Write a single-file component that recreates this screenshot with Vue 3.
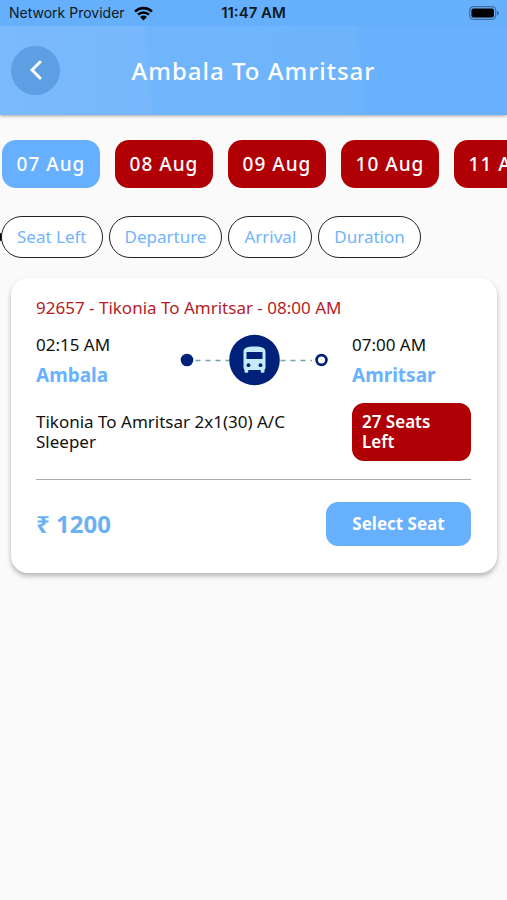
<script setup>
import { ref } from 'vue'

const dates = ['07 Aug', '08 Aug', '09 Aug', '10 Aug', '11 Aug']
const sorts = ['Seat Left', 'Departure', 'Arrival', 'Duration']
const selectedDate = ref('07 Aug')
</script>

<template>
  <div class="screen">
    <header class="header">
      <div class="status">
        <div class="carrier">
          <span>Network Provider</span>
          <svg class="wifi" viewBox="0 0 18 14" aria-hidden="true">
            <path d="M1 5.2a11.4 11.4 0 0 1 16 0" />
            <path d="M3.8 8.1a7.4 7.4 0 0 1 10.4 0" />
            <path class="solid" d="M9 13.6 5.8 10.3a4.6 4.6 0 0 1 6.4 0z" />
          </svg>
        </div>
        <time class="clock">11:47 AM</time>
        <div class="power">
          <svg class="battery" viewBox="0 0 30 14" aria-hidden="true">
            <rect class="case" x="0.7" y="0.7" width="26" height="12.6" rx="3.6" />
            <rect x="2.4" y="2.4" width="22.6" height="9.2" rx="2" />
            <path class="tip" d="M28 4.6c2.4 1 2.4 3.8 0 4.8z" />
          </svg>
        </div>
      </div>
      <div class="bar">
        <button class="back" type="button" aria-label="Back">
          <svg viewBox="0 0 12 20" aria-hidden="true"><path d="M10 2 2 10l8 8" /></svg>
        </button>
        <h1 class="title">Ambala To Amritsar</h1>
      </div>
    </header>

    <main>
      <nav class="dates">
        <button
          v-for="date in dates"
          :key="date"
          type="button"
          class="date"
          :class="{ active: date === selectedDate }"
          @click="selectedDate = date"
        >{{ date }}</button>
      </nav>

      <div class="sorts">
        <button v-for="sort in sorts" :key="sort" type="button" class="sort">{{ sort }}</button>
      </div>

      <article class="card">
        <p class="service">92657 - Tikonia To Amritsar - 08:00 AM</p>
        <div class="trip">
          <div class="stop">
            <time>02:15 AM</time>
            <strong>Ambala</strong>
          </div>
          <svg class="route" viewBox="0 0 150 52" aria-hidden="true">
            <path class="dash" d="M16.500 26.500H50M101.500 26.500H133" />
            <circle class="navy" cx="8" cy="26" r="6.300" />
            <circle class="navy" cx="75.500" cy="26" r="25.300" />
            <circle class="ring" cx="142.500" cy="26" r="4.900" />
            <path class="bus" d="M64.500 18c0-4 3-5.500 11-5.500s11 1.500 11 5.500v15.500c0 1-.4 1.600-1 2.200v1.800c0 .8-.5 1.300-1.300 1.300h-1.200c-.8 0-1.300-.5-1.300-1.300v-1.500H69.300v1.500c0 .8-.5 1.300-1.300 1.300h-1.200c-.8 0-1.300-.5-1.300-1.300v-1.800c-.6-.6-1-1.200-1-2.200z" />
            <rect class="navy" x="67.500" y="18" width="16" height="7" />
            <circle class="navy" cx="69.500" cy="31.200" r="1.900" />
            <circle class="navy" cx="81.500" cy="31.200" r="1.900" />
          </svg>
          <div class="stop">
            <time>07:00 AM</time>
            <strong>Amritsar</strong>
          </div>
        </div>
        <div class="details">
          <p class="coach">Tikonia To Amritsar 2x1(30) A/C Sleeper</p>
          <p class="seats">27 Seats Left</p>
        </div>
        <footer class="purchase">
          <span class="price">₹ 1200</span>
          <button type="button" class="select">Select Seat</button>
        </footer>
      </article>
    </main>
  </div>
</template>

<style>
body {
  margin: 0;
  background: #fafafa;
}
</style>

<style scoped>
.screen {
  min-height: 100vh;
  overflow: hidden;
  background: #fafafa;
  color: #111;
  font-family: "Noto Sans", sans-serif;
  font-size: 17px;
  line-height: 20px;
}
p,
h1 {
  margin: 0;
}
button {
  border: 0;
  font: inherit;
  white-space: nowrap;
  cursor: pointer;
}
.header {
  background: linear-gradient(85deg, #7bbafb 0%, #76b8fb 29%, #70b5fc 30%, #6eb4fc 70%, #69b1fc 71%);
  box-shadow: 0 1px 3px rgba(0, 0, 0, 0.35);
}
.status {
  display: grid;
  grid-template-columns: 1fr auto 1fr;
  align-items: center;
  padding: 3px 8px;
  background: #66affd;
  color: #101820;
  font-family: Inter, sans-serif;
  font-size: 14px;
}
.carrier {
  display: flex;
  align-items: center;
  gap: 9px;
  padding-left: 1px;
}
.wifi {
  width: 19px;
  height: 15px;
  fill: none;
  stroke: #000;
  stroke-width: 2.4;
}
.wifi .solid {
  fill: #000;
  stroke: none;
}
.clock {
  font-size: 15px;
  font-weight: 600;
}
.power {
  display: flex;
  justify-content: flex-end;
}
.battery {
  width: 30px;
  height: 14px;
}
.battery .case {
  fill: none;
  stroke: #3f6f9f;
  stroke-width: 1.2;
}
.battery .tip {
  fill: #3f6f9f;
}
.bar {
  display: grid;
  grid-template-columns: 49px 1fr 49px;
  align-items: center;
  padding: 20px 11px;
}
.back {
  display: grid;
  place-items: center;
  height: 49px;
  padding: 0 0 2px;
  border-radius: 50%;
  background: #5c9fe3;
}
.back svg {
  width: 12px;
  height: 20px;
  fill: none;
  stroke: #fff;
  stroke-width: 3;
  stroke-linecap: round;
}
.title {
  color: #fff;
  font-size: 24px;
  font-weight: 500;
  letter-spacing: 1px;
  line-height: 32px;
  text-align: center;
}
.dates {
  display: flex;
  gap: 15px;
  padding: 25px 2px 0;
}
.date {
  flex: 0 0 98px;
  height: 48px;
  padding: 0;
  border-radius: 14px;
  background: #b00006;
  color: #fff;
  font-size: 19px;
  font-weight: 500;
  letter-spacing: 1px;
}
.date.active {
  background: #66b0ff;
}
.sorts {
  display: flex;
  align-items: center;
  gap: 6px;
  padding: 28px 0 0;
}
.sorts::before {
  content: "";
  width: 2px;
  height: 8px;
  margin-right: -7px;
  border-radius: 0 2px 2px 0;
  background: #000;
}
.sort {
  height: 42px;
  padding: 0 15px;
  border: 1px solid #222;
  border-radius: 21px;
  background: #fff;
  color: #70b5fd;
}
.card {
  margin: 20px 10px 0 11px;
  padding: 20px 26px 27px 25px;
  border-radius: 17px;
  background: #fff;
  box-shadow: 0 3px 5px rgba(0, 0, 0, 0.28);
}
.service {
  color: #b71c25;
}
.trip {
  display: flex;
  justify-content: space-between;
  align-items: center;
  padding-top: 16px;
}
.stop {
  display: flex;
  flex-direction: column;
  gap: 10px;
  width: 119px;
}
.stop strong {
  color: #6ab2fd;
  font-size: 19px;
}
.route {
  flex: 0 1 150px;
  min-width: 0;
  height: 52px;
}
.navy {
  fill: #002179;
}
.dash {
  fill: none;
  stroke: #72a5ad;
  stroke-width: 1.5;
  stroke-dasharray: 5 5;
}
.ring {
  fill: #fff;
  stroke: #002179;
  stroke-width: 2.7;
}
.bus {
  fill: #c5eafa;
}
.details {
  display: flex;
  justify-content: space-between;
  padding: 17px 0 18px;
  border-bottom: 1px solid #aaa;
}
.coach {
  flex: 0 1 264px;
  padding-top: 9px;
}
.seats {
  box-sizing: border-box;
  flex: 0 0 119px;
  padding: 9px 32px 9px 10px;
  border-radius: 12px;
  background: #b00006;
  color: #fff;
  font-weight: 600;
}
.purchase {
  display: flex;
  justify-content: space-between;
  align-items: center;
  padding-top: 22px;
}
.price {
  color: #6ab0f5;
  font-size: 24px;
  font-weight: 700;
}
.select {
  width: 145px;
  height: 44px;
  padding: 0;
  border-radius: 12px;
  background: #66b0fd;
  color: #fff;
  font-weight: 700;
}
</style>
